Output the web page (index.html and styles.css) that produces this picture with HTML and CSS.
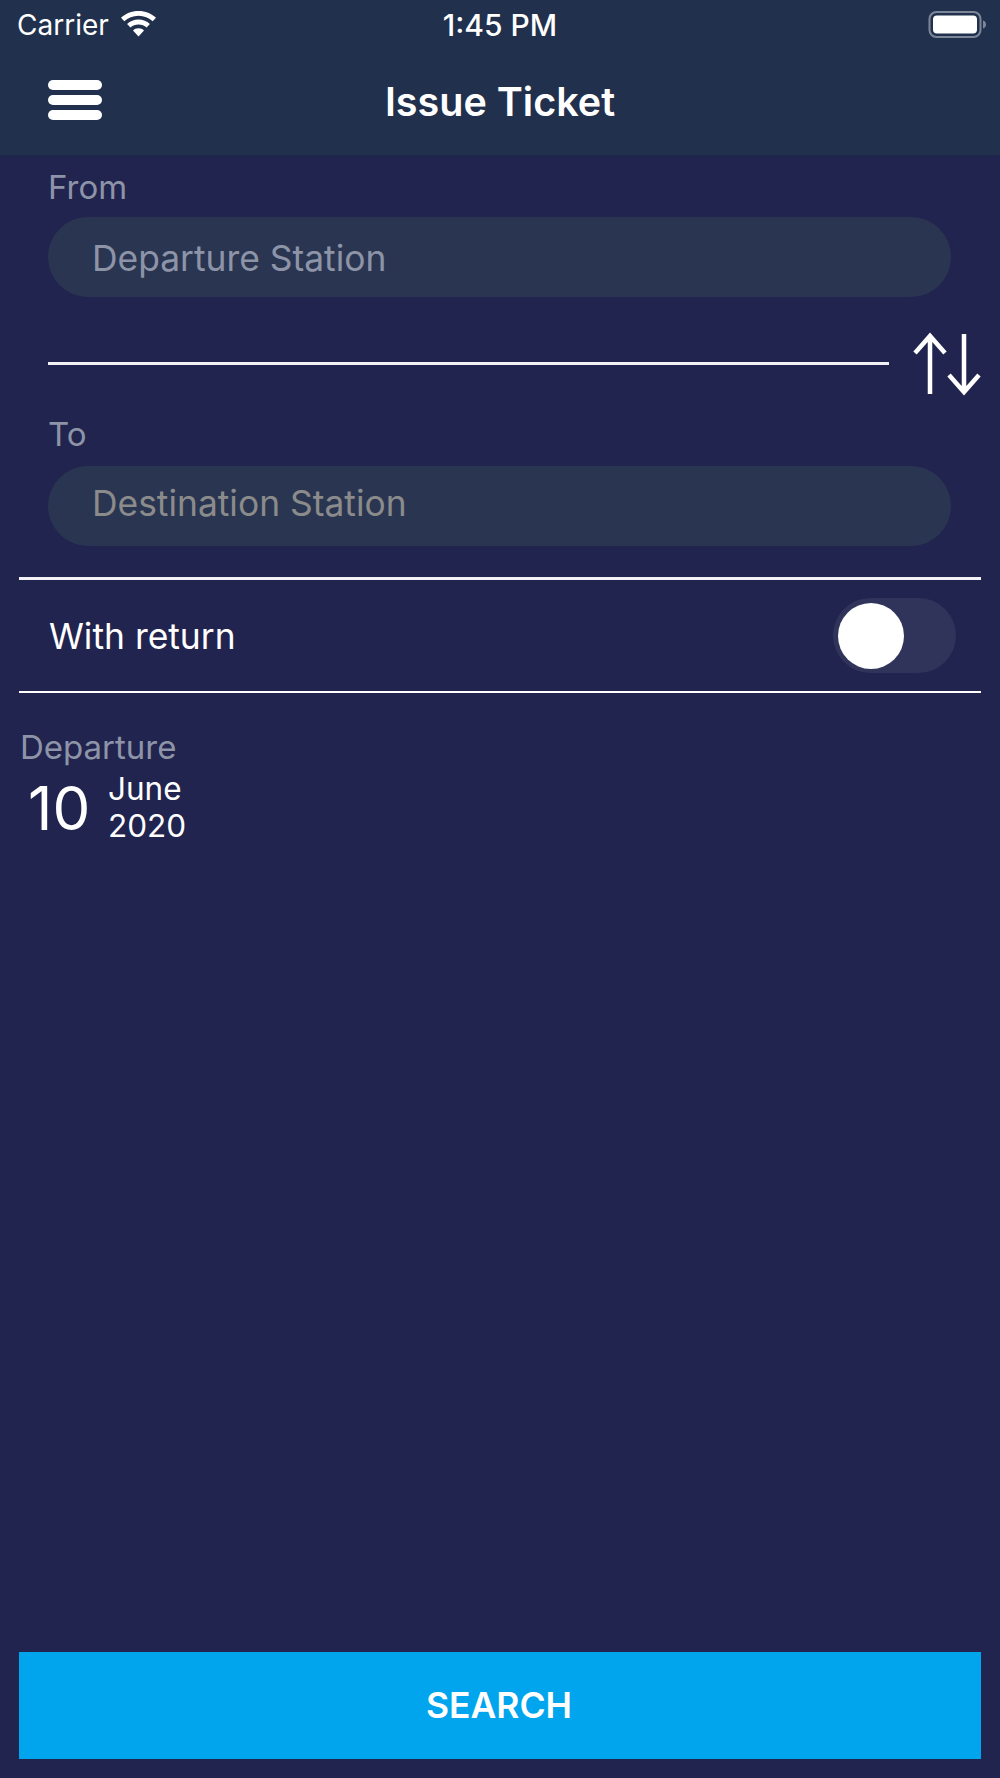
FILE: index.html
```html
<!DOCTYPE html>
<html lang="en">
<head>
    <meta charset="UTF-8">
    <meta name="viewport" content="width=device-width, initial-scale=1.0">
    <title>Issue Ticket</title>
    <link rel="stylesheet" href="styles.css">
</head>
<body>
    <div class="screen">
        <header class="top">
            <div class="status">
                <div class="status-left">
                    <span class="carrier">Carrier</span>
                    <svg class="wifi" width="37" height="28" viewBox="0 0 37 28">
                        <path d="M18.5 1C11.6 1 5.6 3.6 1 7.8L4.3 11.3C8 7.9 13 5.8 18.5 5.8S29 7.9 32.7 11.3L36 7.8C31.4 3.6 25.4 1 18.5 1Z" fill="#fff"/>
                        <path d="M18.5 9.6C14.1 9.6 10.1 11.3 7.1 14.1L10.4 17.5C12.5 15.6 15.4 14.4 18.5 14.4S24.5 15.6 26.6 17.5L29.9 14.1C26.9 11.3 22.9 9.6 18.5 9.6Z" fill="#fff"/>
                        <path d="M18.5 18.2C16.3 18.2 14.4 19 13 20.4L18.5 26.5L24 20.4C22.6 19 20.7 18.2 18.5 18.2Z" fill="#fff"/>
                    </svg>
                </div>
                <span class="clock">1:45 PM</span>
                <svg class="battery" width="60" height="28" viewBox="0 0 60 28">
                    <rect x="1.5" y="2" width="51" height="25" rx="7" fill="none" stroke="#7d8698" stroke-width="2"/>
                    <rect x="5" y="5.5" width="44" height="18" rx="4" fill="#fff"/>
                    <path d="M55 10.5C57 11 58 12.5 58 14.5S57 18 55 18.5Z" fill="#7d8698"/>
                </svg>
            </div>
            <div class="nav">
                <div class="burger"><span></span><span></span><span></span></div>
                <h1>Issue Ticket</h1>
            </div>
        </header>

        <main class="content">
            <section class="stations">
                <label class="field-label label-from">From</label>
                <div class="pill">Departure Station</div>
                <div class="swap-row">
                    <div class="swap-line"></div>
                    <svg class="swap" width="68" height="64" viewBox="0 0 68 64">
                        <path d="M17 62V3M2 21L17 4L32 21" fill="none" stroke="#fff" stroke-width="4.5"/>
                        <path d="M51 2V60M36 43L51 60L66 43" fill="none" stroke="#fff" stroke-width="4.5"/>
                    </svg>
                </div>
                <label class="field-label label-to">To</label>
                <div class="pill pill-dest">Destination Station</div>
            </section>

            <div class="return-row">
                <span class="return-text">With return</span>
                <div class="toggle"><div class="knob"></div></div>
            </div>

            <section class="departure">
                <div class="departure-label">Departure</div>
                <div class="date">
                    <span class="day">10</span>
                    <div class="month">June<br>2020</div>
                </div>
            </section>

            <button class="search">SEARCH</button>
        </main>
    </div>
</body>
</html>
```

FILE: styles.css
```css
* {
    box-sizing: border-box;
}

body {
    margin: 0;
    font-family: Inter, "Noto Sans", sans-serif;
    background-color: #21244e;
    color: white;
}

.screen {
    display: flex;
    flex-direction: column;
    height: 1778px;
}

.top {
    height: 156px;
    background-color: #20304d;
    border-bottom: 1px solid #1d2745;
}

.status {
    display: flex;
    align-items: center;
    justify-content: space-between;
    height: 50px;
    padding: 0 12px 0 17px;
    position: relative;
}

.status-left {
    display: flex;
    align-items: center;
    gap: 11px;
}

.carrier {
    font-size: 28px;
}

.wifi {
    margin-top: -3px;
}

.clock {
    position: absolute;
    left: 0;
    right: 0;
    text-align: center;
    font-size: 30px;
    font-weight: 500;
}

.battery {
    margin-top: -2px;
}

.nav {
    position: relative;
    height: 105px;
    display: flex;
    align-items: center;
    justify-content: center;
}

.nav h1 {
    margin: 0 0 1px;
    font-size: 39.5px;
    font-weight: 600;
}

.burger {
    position: absolute;
    left: 48px;
    top: 30px;
    width: 54px;
    display: flex;
    flex-direction: column;
    gap: 5px;
}

.burger span {
    height: 10px;
    border-radius: 5px;
    background-color: white;
}

.content {
    flex: 1;
    display: flex;
    flex-direction: column;
    padding: 0 19px;
}

.stations {
    padding-left: 29px;
}

.field-label {
    display: block;
    font-size: 33px;
    line-height: 36px;
    color: #8e94a8;
}

.label-from {
    margin-top: 13px;
    margin-bottom: 12px;
}

.label-to {
    margin-top: 12px;
    margin-bottom: 14px;
}

.pill {
    width: 903px;
    height: 80px;
    padding-left: 44px;
    border-radius: 40px;
    background-color: #2a3651;
    font-size: 35.4px;
    line-height: 84px;
    color: #8e94a8;
}

.pill-dest {
    line-height: 76px;
    color: #8b8b8b;
}

.swap-row {
    display: flex;
    align-items: flex-start;
    height: 107px;
    position: relative;
}

.swap-line {
    width: 841px;
    height: 3px;
    margin-top: 65px;
    background-color: #f2f2f6;
}

.swap {
    position: absolute;
    left: 865px;
    top: 35px;
}

.return-row {
    display: flex;
    align-items: center;
    justify-content: space-between;
    height: 116px;
    margin-top: 31px;
    padding: 0 25px 0 30px;
    border-top: 3px solid #f2f2f6;
    border-bottom: 2px solid white;
    font-size: 35.4px;
}

.return-text {
    padding-top: 2px;
}

.toggle {
    width: 123px;
    height: 75px;
    padding: 5px;
    border-radius: 38px;
    background-color: #30345a;
}

.knob {
    width: 66px;
    height: 66px;
    border-radius: 50%;
    background-color: white;
}

.departure {
    margin-top: 36px;
}

.departure-label {
    padding-left: 1px;
    font-size: 33px;
    line-height: 36px;
    color: #8e94a8;
}

.date {
    display: flex;
    align-items: center;
    padding-left: 9px;
    margin-top: 6px;
}

.day {
    font-size: 60px;
    width: 80px;
}

.month {
    font-size: 31.5px;
    line-height: 36.5px;
}

.search {
    margin-top: auto;
    margin-bottom: 19px;
    padding: 0 2px 0 0;
    height: 107px;
    border: none;
    background-color: #00a5ee;
    color: white;
    font-family: inherit;
    font-size: 35.5px;
    font-weight: 600;
}
```
